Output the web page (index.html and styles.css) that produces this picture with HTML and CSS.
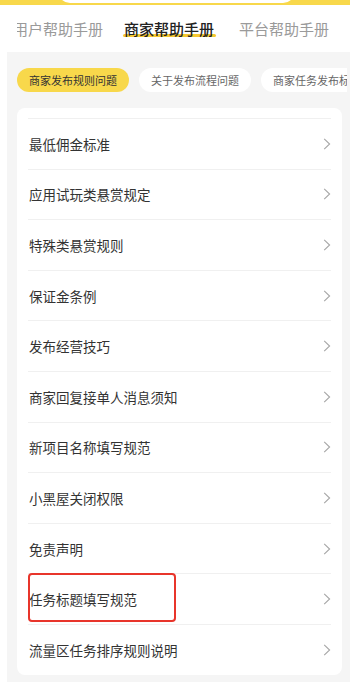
FILE: index.html
```html
<!DOCTYPE html>
<html lang="zh-CN">
<head>
<meta charset="utf-8">
<meta name="viewport" content="width=350">
<title>商家帮助手册</title>
<link rel="stylesheet" href="styles.css">
</head>
<body>
<div class="page">
  <div class="header"><div class="search"></div></div>
  <div class="tabs-clip">
    <div class="tabs">
      <div class="tab first">用户帮助手册</div>
      <div class="tab active"><span class="bar"></span><span class="label">商家帮助手册</span></div>
      <div class="tab">平台帮助手册</div>
    </div>
  </div>
  <div class="panel">
    <div class="chips">
      <div class="chip on">商家发布规则问题</div>
      <div class="chip">关于发布流程问题</div>
      <div class="chip">商家任务发布标准问题</div>
    </div>
    <div class="card">
      <div class="row"><span class="txt">最低佣金标准</span><svg class="chev" viewBox="0 0 8 12" width="8" height="12"><path d="M1.2 0.8 L6.6 6 L1.2 11.2"/></svg></div>
      <div class="row"><span class="txt">应用试玩类悬赏规定</span><svg class="chev" viewBox="0 0 8 12" width="8" height="12"><path d="M1.2 0.8 L6.6 6 L1.2 11.2"/></svg></div>
      <div class="row"><span class="txt">特殊类悬赏规则</span><svg class="chev" viewBox="0 0 8 12" width="8" height="12"><path d="M1.2 0.8 L6.6 6 L1.2 11.2"/></svg></div>
      <div class="row"><span class="txt">保证金条例</span><svg class="chev" viewBox="0 0 8 12" width="8" height="12"><path d="M1.2 0.8 L6.6 6 L1.2 11.2"/></svg></div>
      <div class="row"><span class="txt">发布经营技巧</span><svg class="chev" viewBox="0 0 8 12" width="8" height="12"><path d="M1.2 0.8 L6.6 6 L1.2 11.2"/></svg></div>
      <div class="row"><span class="txt">商家回复接单人消息须知</span><svg class="chev" viewBox="0 0 8 12" width="8" height="12"><path d="M1.2 0.8 L6.6 6 L1.2 11.2"/></svg></div>
      <div class="row"><span class="txt">新项目名称填写规范</span><svg class="chev" viewBox="0 0 8 12" width="8" height="12"><path d="M1.2 0.8 L6.6 6 L1.2 11.2"/></svg></div>
      <div class="row"><span class="txt">小黑屋关闭权限</span><svg class="chev" viewBox="0 0 8 12" width="8" height="12"><path d="M1.2 0.8 L6.6 6 L1.2 11.2"/></svg></div>
      <div class="row"><span class="txt">免责声明</span><svg class="chev" viewBox="0 0 8 12" width="8" height="12"><path d="M1.2 0.8 L6.6 6 L1.2 11.2"/></svg></div>
      <div class="row"><span class="txt">任务标题填写规范</span><span class="mark"></span><svg class="chev" viewBox="0 0 8 12" width="8" height="12"><path d="M1.2 0.8 L6.6 6 L1.2 11.2"/></svg></div>
      <div class="row"><span class="txt">流量区任务排序规则说明</span><svg class="chev" viewBox="0 0 8 12" width="8" height="12"><path d="M1.2 0.8 L6.6 6 L1.2 11.2"/></svg></div>
    </div>
  </div>
</div>
</body>
</html>
```
FILE: styles.css
```css
html, body {
  margin: 0;
  padding: 0;
  background: #ffffff;
}
body {
  font-family: "Noto Sans CJK SC", "Noto Sans", sans-serif;
  width: 350px;
  height: 682px;
  overflow: hidden;
}
.page {
  width: 350px;
  height: 682px;
  overflow: hidden;
}
.header {
  height: 5px;
  background: #f8d84b;
  overflow: hidden;
  padding: 0 55px 0 58px;
}
.search {
  height: 24px;
  margin-top: -21px;
  background: #ffffff;
  border-radius: 12px;
}
.tabs-clip {
  margin-left: 17px;
  height: 47px;
  overflow: hidden;
}
.tabs {
  display: flex;
  gap: 25px;
  margin-left: -4px;
  white-space: nowrap;
  padding-top: 14px;
}
.tab {
  position: relative;
  font-size: 15px;
  line-height: 20px;
  color: #9a9a9a;
}
.tab.first {
  margin-right: -4px;
}
.tab.active {
  color: #222222;
  font-weight: 500;
}
.tab .label {
  position: relative;
}
.tab .bar {
  position: absolute;
  left: -1px;
  right: -2px;
  top: 15px;
  height: 2.5px;
  border-radius: 2px;
  background: #f5c832;
}
.panel {
  margin-left: 7px;
  background: #f5f5f5;
  padding: 16px 3px 0 10px;
  height: 630px;
  box-sizing: border-box;
}
.chips {
  display: flex;
  gap: 10px;
  overflow: hidden;
  white-space: nowrap;
}
.chip {
  flex: none;
  height: 24px;
  line-height: 24px;
  padding: 0 12px;
  border-radius: 12px;
  background: #ffffff;
  font-size: 11px;
  color: #666666;
}
.chip.on {
  background: #f8d84b;
  color: #333333;
}
.card {
  margin-top: 16px;
  margin-right: 5px;
  background: #ffffff;
  border-radius: 8px;
  padding: 10px 11px 0;
}
.row {
  position: relative;
  display: flex;
  align-items: center;
  justify-content: space-between;
  height: 50.6px;
  box-sizing: border-box;
  border-top: 1px solid #f0f0f0;
}
.txt {
  font-size: 13.5px;
  color: #333333;
  padding-left: 1px;
}
.chev {
  flex: none;
  fill: none;
  stroke: #a6a6a6;
  stroke-width: 1.1;
}
.mark {
  position: absolute;
  left: 0;
  top: -1px;
  width: 148px;
  height: 49px;
  box-sizing: border-box;
  border: 2px solid #e8352b;
  border-radius: 4px;
}
```
